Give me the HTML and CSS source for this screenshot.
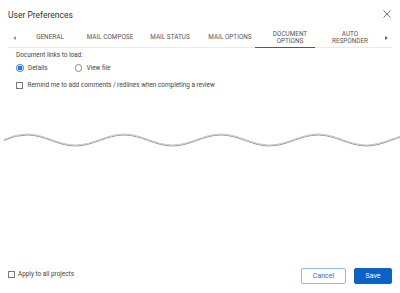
FILE: index.html
```html
<!DOCTYPE html>
<html lang="en">
<head>
    <meta charset="UTF-8">
    <meta name="viewport" content="width=device-width, initial-scale=1.0">
    <title>User Preferences</title>
    <link rel="stylesheet" href="styles.css">
</head>
<body>
    <div class="dialog">
        <div class="dialog-header">
            <h1>User Preferences</h1>
            <button class="close-btn" aria-label="Close">
                <svg width="8" height="8" viewBox="0 0 8 8"><path d="M0.5 0.5 L7.5 7.5 M7.5 0.5 L0.5 7.5" stroke="#666" stroke-width="0.9" fill="none"/></svg>
            </button>
        </div>

        <div class="tabs">
            <span class="tab-arrow">
                <svg width="3" height="4" viewBox="0 0 3 4"><path d="M3 0 L0 2 L3 4 Z" fill="#999"/></svg>
            </span>
            <div class="tab-list">
                <div class="tab">GENERAL</div>
                <div class="tab">MAIL COMPOSE</div>
                <div class="tab">MAIL STATUS</div>
                <div class="tab">MAIL OPTIONS</div>
                <div class="tab active">DOCUMENT<br>OPTIONS</div>
                <div class="tab">AUTO<br>RESPONDER</div>
            </div>
            <span class="tab-arrow">
                <svg width="3" height="4" viewBox="0 0 3 4"><path d="M0 0 L3 2 L0 4 Z" fill="#666"/></svg>
            </span>
        </div>

        <div class="tab-content">
            <div class="field-label">Document links to load:</div>
            <div class="radio-row">
                <label class="radio"><span class="radio-dot checked"></span>Details</label>
                <label class="radio"><span class="radio-dot"></span>View file</label>
            </div>
            <label class="check check-remind"><span class="check-box"></span>Remind me to add comments / redlines when completing a review</label>
        </div>

        <div class="cut">
            <svg width="400" height="24" viewBox="0 0 400 24">
                <path d="M4,11.5 Q15,6 27,6 C44.7,6 57.8,17 75.5,17 C93.2,17 106.3,6 124,6 C141.7,6 154.8,17 172.5,17 C190.2,17 203.3,6 221,6 C238.7,6 251.8,17 269.5,17 C287.2,17 300.3,6 318,6 C335.7,6 348.8,17 366.5,17 C384.2,17 397.3,6 415,6" stroke="#c4c4c4" stroke-width="1" fill="none"/>
            </svg>
        </div>

        <div class="dialog-footer">
            <label class="check"><span class="check-box"></span>Apply to all projects</label>
            <div class="footer-btns">
                <button class="btn btn-cancel">Cancel</button>
                <button class="btn btn-save">Save</button>
            </div>
        </div>
    </div>
</body>
</html>
```

FILE: styles.css
```css
body {
    margin: 0;
    font-family: Roboto, "Liberation Sans", Arial, sans-serif;
    background-color: #fff;
    color: #444;
}

.dialog {
    display: flex;
    flex-direction: column;
    height: 293px;
    box-sizing: border-box;
}

.dialog-header {
    display: flex;
    justify-content: space-between;
    align-items: center;
    padding: 10px 9px 0 8px;
}

.dialog-header h1 {
    margin: 0;
    font-size: 8.5px;
    line-height: 11px;
    font-weight: normal;
    color: #333;
}

.close-btn {
    background: transparent;
    border: none;
    padding: 0;
    width: 8px;
    height: 8px;
    display: flex;
    margin-top: -4px;
}

/* Tabs */
.tabs {
    display: flex;
    align-items: center;
    height: 19px;
    margin: 7px 8px 0 8px;
    border-bottom: 1px solid #eaeaea;
}

.tab-arrow {
    width: 13.5px;
    display: flex;
    justify-content: center;
    align-items: center;
    height: 100%;
}

.tab-list {
    display: flex;
    height: 100%;
}

.tab {
    width: 60px;
    height: 100%;
    display: flex;
    align-items: center;
    justify-content: center;
    text-align: center;
    font-size: 6.4px;
    line-height: 7px;
    color: #555;
    position: relative;
}

.tab.active::after {
    content: "";
    position: absolute;
    left: -5px;
    width: 60px;
    bottom: -1px;
    height: 1.5px;
    background-color: #1a62b8;
}

/* Content */
.tab-content {
    padding: 0 16px;
    font-size: 6.4px;
    line-height: 8px;
    color: #444;
}

.field-label {
    margin-top: 3px;
}

.radio-row {
    display: flex;
    gap: 27px;
    margin-top: 5px;
}

.radio,
.check {
    display: flex;
    align-items: center;
    gap: 4.5px;
}

.radio-dot {
    width: 5.5px;
    height: 5.5px;
    border: 0.8px solid #888;
    border-radius: 50%;
    box-sizing: content-box;
    display: inline-block;
}

.radio-dot.checked {
    border-color: #2a7ad6;
    background: radial-gradient(circle, #2a7ad6 0 2.2px, #fff 2.6px);
}

.check-box {
    width: 5px;
    height: 5px;
    border: 0.8px solid #777;
    border-radius: 0.5px;
    display: inline-block;
}

.check-remind {
    margin-top: 9px;
}

.cut {
    margin-top: 39px;
    height: 24px;
}

.cut svg {
    display: block;
    filter: drop-shadow(0 1.5px 0.7px rgba(0, 0, 0, 0.4));
}

/* Footer */
.dialog-footer {
    margin-top: auto;
    display: flex;
    justify-content: space-between;
    align-items: center;
    padding: 0 8px 9px 8px;
    font-size: 6.4px;
    color: #444;
}

.dialog-footer .check {
    margin-bottom: 4px;
    gap: 3px;
}

.footer-btns {
    display: flex;
    gap: 8px;
}

.btn {
    height: 16px;
    border-radius: 2px;
    font-family: Roboto, "Liberation Sans", Arial, sans-serif;
    font-size: 7px;
    padding: 0;
    cursor: pointer;
}

.btn-cancel {
    width: 45px;
    background-color: #fff;
    border: 1px solid #93b9e6;
    color: #3f6da3;
}

.btn-save {
    width: 38px;
    background-color: #0b63c9;
    border: 1px solid #0b63c9;
    color: #fff;
}
```
